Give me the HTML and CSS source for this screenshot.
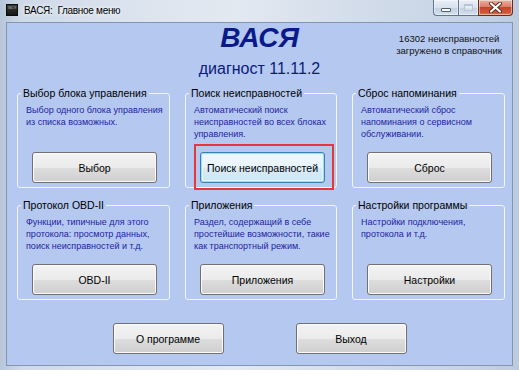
FILE: index.html
```html
<!DOCTYPE html>
<html lang="ru">
<head>
<meta charset="utf-8">
<title>ВАСЯ: Главное меню</title>
<link rel="stylesheet" href="styles.css">
</head>
<body>
<div class="window">
  <div class="titlebar">
    <div class="appicon"><span>ВАСЯ</span></div>
    <div class="title">ВАСЯ:&nbsp; Главное меню</div>
    <div class="caption">
      <div class="cb min"><span class="min-glyph"></span></div>
      <div class="cb max"><span class="max-glyph"></span></div>
      <div class="cb close">
        <svg width="13" height="11" viewBox="0 0 13 11">
          <path d="M2 1.5 L11 9.5 M11 1.5 L2 9.5" stroke="#5a2418" stroke-width="4" stroke-linecap="round"/>
          <path d="M2 1.5 L11 9.5 M11 1.5 L2 9.5" stroke="#ffffff" stroke-width="2.2" stroke-linecap="round"/>
        </svg>
      </div>
    </div>
  </div>
  <div class="client">
    <header class="head">
      <div></div>
      <div class="brand">
        <div class="logo">ВАСЯ</div>
        <div class="ver">диагност 11.11.2</div>
      </div>
      <div class="info">16302 неисправностей<br>загружено в справочник</div>
    </header>
    <div class="groups">
      <section class="group">
        <div class="legend">Выбор блока управления</div>
        <p class="desc">Выбор одного блока управления<br>из списка возможных.</p>
        <button class="btn">Выбор</button>
      </section>
      <section class="group">
        <div class="legend">Поиск неисправностей</div>
        <p class="desc">Автоматический поиск<br>неисправностей во всех блоках<br>управления.</p>
        <button class="btn focus">Поиск неисправностей</button>
      </section>
      <section class="group">
        <div class="legend">Сброс напоминания</div>
        <p class="desc">Автоматический сброс<br>напоминания о сервисном<br>обслуживании.</p>
        <button class="btn">Сброс</button>
      </section>
      <section class="group">
        <div class="legend">Протокол OBD-II</div>
        <p class="desc">Функции, типичные для этого<br>протокола: просмотр данных,<br>поиск неисправностей и т.д.</p>
        <button class="btn">OBD-II</button>
      </section>
      <section class="group">
        <div class="legend">Приложения</div>
        <p class="desc">Раздел, содержащий в себе<br>простейшие возможности, такие<br>как транспортный режим.</p>
        <button class="btn">Приложения</button>
      </section>
      <section class="group">
        <div class="legend">Настройки программы</div>
        <p class="desc">Настройки подключения,<br>протокола и т.д.</p>
        <button class="btn">Настройки</button>
      </section>
    </div>
    <div class="footer">
      <button class="btn wide">О программе</button>
      <button class="btn wide">Выход</button>
    </div>
  </div>
</div>
</body>
</html>
```
FILE: styles.css
```css
* { box-sizing: border-box; }
html, body { margin: 0; padding: 0; }
body {
  width: 519px;
  height: 370px;
  overflow: hidden;
  font-family: "Liberation Sans", Arial, sans-serif;
  background: #cdd8e7;
}
.window {
  width: 519px;
  height: 370px;
  display: flex;
  flex-direction: column;
  background: linear-gradient(90deg, #b7c6da 0%, #cfd9e7 4%, #dbe3ee 25%, #e3e9f1 45%, #d2dcea 70%, #c6d3e4 92%, #bccadd 100%);
}
.titlebar {
  height: 22px;
  flex-shrink: 0;
  display: flex;
  align-items: flex-start;
}
.appicon {
  width: 12px;
  height: 12px;
  margin: 4px 0 0 6px;
  background: linear-gradient(#3a3a3a, #161616);
  border: 1px solid #0c0c0c;
  display: flex;
  justify-content: center;
  overflow: hidden;
}
.appicon span {
  font-size: 3px;
  line-height: 4px;
  color: #9a9a9a;
  margin-top: 1px;
}
.title {
  margin: 4px 0 0 6px;
  font-size: 10px;
  line-height: 14px;
  letter-spacing: -0.3px;
  color: #000;
  text-shadow: 0 0 5px #f4f7fb, 0 0 3px #f4f7fb;
}
.caption {
  margin-left: auto;
  margin-right: 6px;
  display: flex;
  height: 16px;
}
.cb {
  height: 16px;
  border: 1px solid #63748f;
  border-top: 0;
  display: flex;
  align-items: center;
  justify-content: center;
  box-shadow: inset 0 0 0 1px rgba(255,255,255,0.45);
}
.min {
  width: 25px;
  border-right: 0;
  border-radius: 0 0 0 4px;
  background: linear-gradient(#e9eff7, #d7e1ed 50%, #c3d0e1 51%, #d4dfec);
}
.max {
  width: 20px;
  border-right: 0;
  background: linear-gradient(#e9eff7, #d7e1ed 50%, #c3d0e1 51%, #d4dfec);
}
.close {
  width: 35px;
  border-color: #6a2b22;
  border-radius: 0 0 4px 0;
  background: linear-gradient(#eab2a4, #dc7e68 45%, #c4442c 50%, #cf5a3c 85%, #e07a52 100%);
}
.min-glyph {
  width: 10px;
  height: 4px;
  margin-top: 5px;
  background: #fff;
  border: 1px solid #4f5e76;
  border-radius: 1px;
}
.max-glyph {
  width: 9px;
  height: 7px;
  border: 1px solid #b9c5d6;
  border-top-width: 2px;
  background: rgba(255,255,255,0.35);
}
.client {
  margin: 0 6px 4px;
  flex: 1;
  background: #b5c9f0;
  border: 1px solid #8195b5;
  display: flex;
  flex-direction: column;
}
.head {
  display: grid;
  grid-template-columns: 1fr auto 1fr;
}
.brand {
  display: flex;
  flex-direction: column;
  align-items: center;
}
.logo {
  font-size: 28px;
  line-height: 30px;
  font-weight: bold;
  font-style: italic;
  color: #0b1a8b;
}
.ver {
  margin-top: 7px;
  font-size: 16px;
  line-height: 18px;
  color: #0d1a7c;
}
.info {
  justify-self: end;
  margin: 10px 10px 0 0;
  text-align: center;
  font-size: 9.5px;
  line-height: 12px;
  color: #111;
}
.groups {
  display: grid;
  grid-template-columns: 153px 152px 153px;
  grid-template-rows: 95px 95px;
  column-gap: 15px;
  row-gap: 17px;
  margin: 15px 0 0 10px;
}
.group {
  border: 1px solid #f1f5fc;
  border-radius: 3px;
  padding: 0 8px;
  display: flex;
  flex-direction: column;
  min-width: 0;
}
.legend {
  align-self: flex-start;
  margin: -8px 0 0 -5px;
  padding: 0 2px;
  background: #b5c9f0;
  font-size: 10.5px;
  line-height: 14px;
  color: #000;
  white-space: nowrap;
}
.desc {
  margin: 4px 0 0;
  font-size: 9px;
  line-height: 12px;
  color: #1f22a3;
  white-space: nowrap;
}
.btn {
  margin: auto 0 4px 6px;
  width: 125px;
  height: 31px;
  padding: 0;
  border: 1px solid #707070;
  border-radius: 3px;
  background: linear-gradient(#f3f3f3 0%, #ebebeb 50%, #dddddd 51%, #cfcfcf 100%);
  box-shadow: inset 0 0 0 1px #fbfbfb;
  font-family: "Liberation Sans", Arial, sans-serif;
  font-size: 10.5px;
  color: #000;
}
.btn.focus {
  position: relative;
  border-color: #3c7fb1;
  background: linear-gradient(#f2f9fd 0%, #e6f3fb 50%, #d9ecf7 51%, #cde5f3 100%);
  box-shadow: inset 0 0 0 1px #9fdcf7, inset 0 0 0 2px #e2f5fd;
}
.btn.focus::after {
  content: "";
  position: absolute;
  top: -9px;
  left: -7px;
  right: -10px;
  bottom: -8px;
  border: 2px solid #e5383a;
}
.footer {
  display: flex;
  justify-content: center;
  gap: 72px;
  margin-top: 23px;
}
.btn.wide {
  margin: 0;
  width: 111px;
}
```
